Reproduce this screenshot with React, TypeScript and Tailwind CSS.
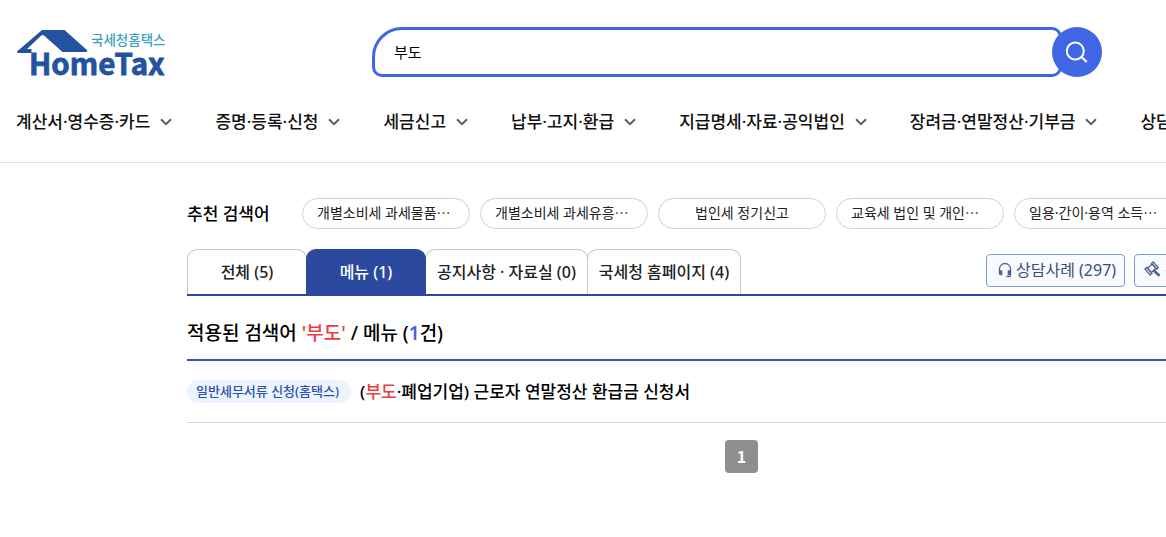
import React from 'react';

const menus = ['계산서·영수증·카드', '증명·등록·신청', '세금신고', '납부·고지·환급', '지급명세·자료·공익법인', '장려금·연말정산·기부금', '상담·불복·제보'];

const keywords = [
  { label: '개별소비세 과세물품', cut: true },
  { label: '개별소비세 과세유흥', cut: true },
  { label: '법인세 정기신고', cut: false },
  { label: '교육세 법인 및 개인', cut: true },
  { label: '일용·간이·용역 소득', cut: true },
];

const tabs = [
  { label: '전체 (5)', width: 'w-[120px]', active: false },
  { label: '메뉴 (1)', width: 'w-[120px]', active: true },
  { label: '공지사항 · 자료실 (0)', width: 'w-[163px]', active: false },
  { label: '국세청 홈페이지 (4)', width: 'w-[154px]', active: false },
];

function Logo() {
  return (
    <a href="#" aria-label="국세청홈택스 HomeTax" className="block shrink-0">
      <svg width="152" height="50" viewBox="0 0 152 50" className="overflow-visible" aria-hidden="true">
        <path d="M25 3H47.500L70.500 23.500L69.500 25H45.500L27 8.500Q25.500 7.500 24 8.800L10 22H14.500V26H0.500L0 24.500Z" fill="#2452a0" />
        <text x="74" y="18" fontSize="13.500" fontWeight="500" fill="#3a9fc0">국세청홈택스</text>
        <text x="12" y="48" fontSize="29.500" fontWeight="700" fill="#2452a0" stroke="#2452a0" strokeWidth="0.800" className="font-['Noto_Sans_CJK_KR',sans-serif]">HomeTax</text>
      </svg>
    </a>
  );
}

function Chevron() {
  return (
    <svg width="12" height="8" viewBox="0 0 12 8" fill="none" stroke="#5c5c6a" strokeWidth="2" aria-hidden="true">
      <path d="M1 1.200L6 6.200L11 1.200" />
    </svg>
  );
}

function Headset() {
  return (
    <svg width="14" height="16" viewBox="0 0 14 16" fill="none" stroke="#56638f" strokeWidth="1.300" aria-hidden="true">
      <path d="M1.500 10V7a5.500 5.500 0 0 1 11 0v3" />
      <path d="M1.500 8.800H3.700V12.500H2.500A1 1 0 0 1 1.500 11.500ZM12.500 8.800H10.300V12.500H11.500A1 1 0 0 0 12.500 11.500Z" fill="#56638f" />
      <path d="M12.500 11.500v1.800a1.200 1.200 0 0 1-1.200 1.200H8.500" />
    </svg>
  );
}

function Gavel() {
  return (
    <svg width="17" height="17" viewBox="0 0 17 17" fill="none" stroke="#56638f" strokeWidth="1.300" aria-hidden="true">
      <path d="M3.500 7.300L8.300 3L12 7.200L7.200 11.500Z" />
      <path d="M1 8L2.800 6.400L8 12.400L6.200 14ZM7.500 2.400L9.300 0.900L14.200 6.800L12.500 8.300Z" />
      <path d="M9.800 9.500L15.500 14.800" strokeWidth="2.600" />
    </svg>
  );
}

export default function App() {
  return (
    <div className="min-h-screen overflow-x-hidden bg-white font-['Noto_Sans','Noto_Sans_CJK_KR',sans-serif] text-black">
      <header className="border-b border-[#e0e0e0] pb-7 pt-[27px]">
        <div className="flex items-start pl-[17px]">
          <Logo />
          <form className="ml-[203px] flex h-[50px] w-[730px]" onSubmit={(e) => e.preventDefault()}>
            <input
              type="text"
              aria-label="검색어"
              defaultValue="부도"
              className="h-[50px] min-w-0 flex-1 rounded-[10px] rounded-tl-[30px] border-[3px] border-[#3f66e4] bg-white pb-0.5 pl-[19px] text-[15px] outline-none"
            />
            <button type="submit" aria-label="검색" className="-ml-[10px] flex size-[50px] shrink-0 items-center justify-center rounded-full bg-[#3f66e4]">
              <svg width="24" height="24" viewBox="0 0 24 24" fill="none" stroke="white" strokeWidth="2" aria-hidden="true">
                <circle cx="10.300" cy="11" r="8.500" />
                <path d="M16.500 17L21.800 22" />
              </svg>
            </button>
          </form>
        </div>
        <nav aria-label="주 메뉴" className="mt-8 flex gap-[43px] pl-4">
          {menus.map((m) => (
            <button key={m} type="button" className="flex shrink-0 items-center gap-2.5 whitespace-nowrap text-[17px] font-medium leading-[25px] text-[#111]">
              {m}
              <Chevron />
            </button>
          ))}
        </nav>
      </header>

      <main className="ml-[187px] min-w-[1109px]">
        <section className="flex items-center pt-[35px]">
          <h2 className="w-[115px] shrink-0 text-[17px] font-medium">추천 검색어</h2>
          <div className="flex gap-2.5">
            {keywords.map((k) => (
              <button
                key={k.label}
                type="button"
                className={`h-[31px] w-[168px] shrink-0 whitespace-nowrap rounded-full border border-[#d0d0d0] pb-0.5 text-sm text-[#222] ${k.cut ? 'pl-3.5 text-left' : 'text-center'}`}
              >
                {k.label}
                {k.cut && <span className="font-['Noto_Sans_CJK_KR',sans-serif]">…</span>}
              </button>
            ))}
          </div>
        </section>

        <div className="mt-5 flex items-end border-b-2 border-[#2b499e]">
          <div role="tablist" className="flex">
            {tabs.map((t) => (
              <button
                key={t.label}
                type="button"
                role="tab"
                aria-selected={t.active}
                className={`-mr-px h-[45px] shrink-0 whitespace-nowrap rounded-t-[10px] border border-b-0 text-base font-medium ${t.width} ${
                  t.active ? 'relative border-[#2b499e] bg-[#2b499e] text-white' : 'border-[#c6c6c6] bg-white text-[#222]'
                }`}
              >
                {t.label}
              </button>
            ))}
          </div>
          <div className="ml-[246px] flex gap-[9px] pb-[7px]">
            <button type="button" className="flex h-[33px] w-[139px] shrink-0 items-center gap-1 whitespace-nowrap rounded border border-[#7c9bd3] bg-[#f9fbff] pb-0.5 pl-[11px] text-base text-[#3d4a78]">
              <Headset />
              상담사례 (297)
            </button>
            <button type="button" className="flex h-[33px] w-[139px] shrink-0 items-center gap-1 whitespace-nowrap rounded border border-[#7c9bd3] bg-[#f9fbff] pb-0.5 pl-[9px] text-base text-[#3d4a78]">
              <Gavel />
              판례
            </button>
          </div>
        </div>

        <h1 className="border-b-2 border-[#3357b8] pb-3 pt-[23px] text-[19px] font-medium leading-7">
          적용된 검색어 <span className="text-[#eb3d3d]">'부도'</span> / 메뉴 (<span className="font-semibold text-[#3f66e4]">1</span>건)
        </h1>

        <ul>
          <li className="flex h-[62px] items-center gap-[9px] border-b border-[#d6d6d6]">
            <span className="rounded-full bg-[#ebf4ff] pl-[9px] pr-3 text-[13px] font-medium leading-[23px] text-[#2b50b0]">일반세무서류 신청(홈택스)</span>
            <a href="#" className="text-[17px] font-medium">
              (<span className="text-[#eb3d3d]">부도</span>·폐업기업) 근로자 연말정산 환급금 신청서
            </a>
          </li>
        </ul>

        <nav aria-label="페이지" className="flex justify-center pt-[17px]">
          <button type="button" aria-current="page" className="size-[33px] rounded bg-[#8e8e8e] pb-0.5 font-['Noto_Sans_CJK_KR',sans-serif] text-base font-bold text-white">
            1
          </button>
        </nav>
      </main>
    </div>
  );
}
